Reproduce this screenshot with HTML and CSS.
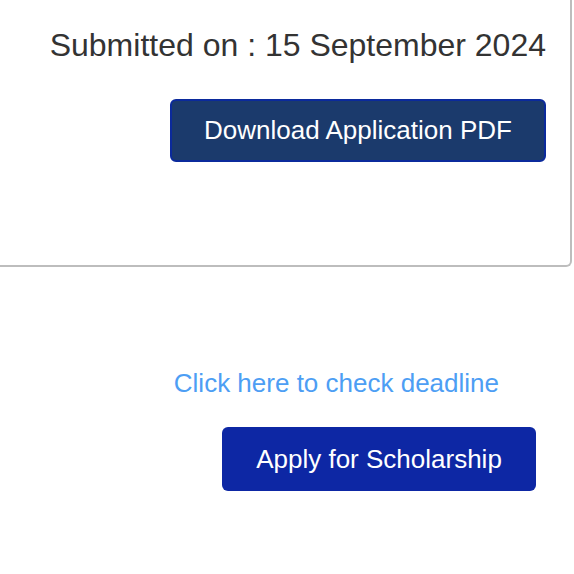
FILE: index.html
```html
<!DOCTYPE html>
<html lang="en">
<head>
<meta charset="utf-8">
<title>Application</title>
<link rel="stylesheet" href="styles.css">
</head>
<body>
  <section class="card">
    <p class="submitted">Submitted on : 15 September 2024</p>
    <button class="btn btn-download" type="button">Download Application PDF</button>
  </section>
  <div class="actions">
    <a class="deadline-link" href="#">Click here to check deadline</a>
    <button class="btn btn-apply" type="button">Apply for Scholarship</button>
  </div>
</body>
</html>
```
FILE: styles.css
```css
* { box-sizing: border-box; }
html, body { margin: 0; padding: 0; background: #ffffff; }
body {
  font-family: "Liberation Sans", Arial, Helvetica, sans-serif;
  width: 574px;
  height: 574px;
  overflow: hidden;
}
.card {
  width: 572px;
  height: 267px;
  border-right: 2px solid #bdbdbd;
  border-bottom: 2px solid #bdbdbd;
  border-bottom-right-radius: 6px;
  display: flex;
  flex-direction: column;
  align-items: flex-end;
  padding: 27px 24px 0 0;
}
.submitted {
  margin: 0;
  font-size: 32px;
  line-height: 37px;
  color: #333333;
  white-space: nowrap;
}
.btn {
  font-family: inherit;
  color: #ffffff;
  border-radius: 6px;
  cursor: pointer;
  white-space: nowrap;
  padding: 0;
}
.btn-download {
  margin-top: 35px;
  width: 376px;
  height: 63px;
  font-size: 26px;
  background: #1b3a6c;
  border: 2px solid #0b2a9c;
}
.actions {
  display: flex;
  flex-direction: column;
  align-items: flex-end;
  padding-top: 101px;
}
.deadline-link {
  margin-right: 75px;
  font-size: 26px;
  line-height: 30px;
  color: #4d9ef4;
  text-decoration: none;
}
.btn-apply {
  margin-top: 29px;
  margin-right: 38px;
  width: 314px;
  height: 64px;
  font-size: 26px;
  background: #0d27a4;
  border: none;
}
```
